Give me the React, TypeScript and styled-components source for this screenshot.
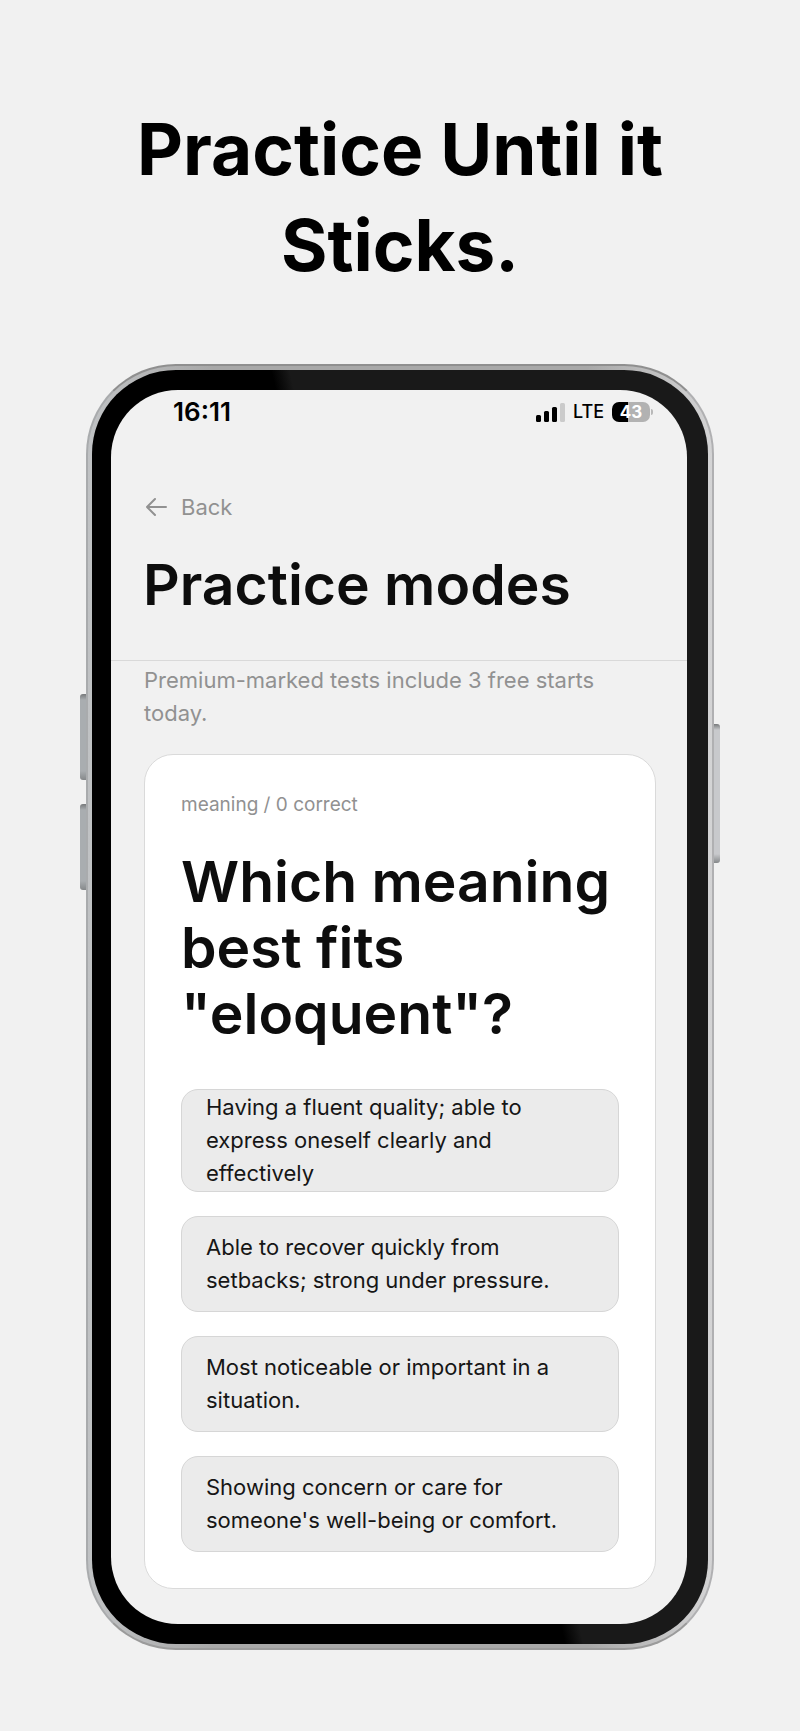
import React from 'react';
import styled, { createGlobalStyle } from 'styled-components';

const GlobalStyle = createGlobalStyle`
  * { box-sizing: border-box; }
  body {
    margin: 0;
    background: #f1f1f1;
    color: #0d0d0d;
    font-family: Inter, "Liberation Sans", sans-serif;
  }
  h1, h2, p { margin: 0; }
`;

const Page = styled.div`
  display: flex;
  flex-direction: column;
  gap: 71px;
  padding: 101px 86px 82px;
`;

const Headline = styled.h1`
  color: #000;
  font-size: 71px;
  line-height: 96px;
  font-weight: 700;
  text-align: center;
`;

const Phone = styled.div`
  position: relative;
  padding: 4px;
  border: 2px solid;
  border-color: #8f8f8f #b0b0b2 #9b9b9b #a9abad;
  border-radius: 90px;
  background: linear-gradient(90deg, #c0c2c4, #a8a8a8 20%, #a8a8a8 80%, #d4d4d5);
`;

const SideButton = styled.span<{ $side: 'left' | 'right'; $top: number; $height: number }>`
  position: absolute;
  ${(p) => p.$side}: -8px;
  top: ${(p) => p.$top}px;
  width: 6px;
  height: ${(p) => p.$height}px;
  border-radius: ${(p) => (p.$side === 'left' ? '3px 0 0 3px' : '0 3px 3px 0')};
  background: linear-gradient(
    #77797b,
    ${(p) => (p.$side === 'left' ? '#a9adb0' : '#c8c9cc')} 6px,
    ${(p) => (p.$side === 'left' ? '#a9adb0' : '#c8c9cc')} calc(100% - 9px),
    #85888a
  );
`;

const Bezel = styled.div`
  padding: 20px 21px 20px 19px;
  border-radius: 84px;
  background: linear-gradient(77deg, #000 52%, #191919 54%);
`;

const Screen = styled.main`
  overflow: hidden;
  padding-bottom: 35px;
  border-radius: 67px;
  background: #f1f1f1;
`;

const StatusBar = styled.div`
  display: flex;
  align-items: center;
  justify-content: space-between;
  padding: 6px 37px 0 62px;
`;

const Clock = styled.time`
  color: #000;
  font-size: 26px;
  line-height: 32px;
  font-weight: 600;
`;

const Indicators = styled.div`
  display: flex;
  align-items: center;
  gap: 8px;
  color: #000;
`;

const Network = styled.span`
  font-size: 18px;
  line-height: 32px;
  font-weight: 500;
`;

const Battery = styled.span`
  position: relative;
  width: 38px;
  border-radius: 7px;
  background: linear-gradient(90deg, #000 43%, #b2b2b2 43%);
  color: #fff;
  font-size: 17px;
  line-height: 20px;
  font-weight: 700;
  text-align: center;

  &::after {
    content: '';
    position: absolute;
    left: 39px;
    top: 7px;
    width: 2px;
    height: 6px;
    border-radius: 0 2px 2px 0;
    background: #b8b8b8;
  }
`;

const Header = styled.header`
  display: flex;
  flex-direction: column;
  align-items: flex-start;
  gap: 28px;
  padding: 63px 32px 41px;
  border-bottom: 1px solid #d9d9d9;
`;

const BackButton = styled.button`
  display: flex;
  align-items: center;
  gap: 14px;
  padding: 0 0 0 3px;
  border: 0;
  background: none;
  color: #919191;
  font: 400 22px/32px Inter, "Liberation Sans", sans-serif;
`;

const Title = styled.h2`
  font-size: 57px;
  line-height: 68px;
  font-weight: 600;
`;

const Content = styled.div`
  display: flex;
  flex-direction: column;
  gap: 24px;
  padding: 3px 31px 0 33px;
`;

const Notice = styled.p`
  color: #919191;
  font-size: 22px;
  line-height: 33px;
`;

const Card = styled.section`
  padding: 36px;
  border: 1px solid #dadada;
  border-radius: 29px;
  background: #fff;
`;

const Progress = styled.p`
  color: #919191;
  font-size: 19px;
  line-height: 28px;
`;

const Question = styled.h2`
  margin: 30px 0 42px;
  font-size: 57px;
  line-height: 66px;
  font-weight: 600;
`;

const Answers = styled.div`
  display: flex;
  flex-direction: column;
  gap: 24px;
`;

const Answer = styled.button`
  min-height: 96px;
  padding: 1px 24px;
  border: 1px solid #d6d6d6;
  border-radius: 17px;
  background: #ebebeb;
  color: #161616;
  font: 400 22px/33px Inter, "Liberation Sans", sans-serif;
  text-align: left;
`;

const BackArrow = () => (
  <svg width="21" height="20" viewBox="0 0 21 20" fill="none" stroke="currentColor" strokeWidth="2" strokeLinecap="round" strokeLinejoin="round" aria-hidden="true">
    <path d="M20 10H1M9 2L1 10l8 8" />
  </svg>
);

const Signal = () => (
  <svg width="29" height="20" viewBox="0 0 29 20" aria-hidden="true">
    <rect x="0" y="13" width="5" height="7" rx="1.5" />
    <rect x="8" y="9" width="5" height="11" rx="1.5" />
    <rect x="16" y="5" width="5" height="15" rx="1.5" />
    <rect x="24" y="1" width="5" height="19" rx="1.5" fill="#cbcbcb" />
  </svg>
);

const answers = [
  'Having a fluent quality; able to express oneself clearly and effectively',
  'Able to recover quickly from setbacks; strong under pressure.',
  'Most noticeable or important in a situation.',
  "Showing concern or care for someone's well-being or comfort.",
];

export default function App() {
  return (
    <>
      <GlobalStyle />
      <Page>
        <Headline>Practice Until it Sticks.</Headline>
        <Phone>
          <SideButton $side="left" $top={328} $height={86} />
          <SideButton $side="left" $top={438} $height={86} />
          <SideButton $side="right" $top={358} $height={139} />
          <Bezel>
            <Screen>
              <StatusBar>
                <Clock>16:11</Clock>
                <Indicators>
                  <Signal />
                  <Network>LTE</Network>
                  <Battery>43</Battery>
                </Indicators>
              </StatusBar>
              <Header>
                <BackButton type="button">
                  <BackArrow />
                  Back
                </BackButton>
                <Title>Practice modes</Title>
              </Header>
              <Content>
                <Notice>Premium-marked tests include 3 free starts today.</Notice>
                <Card>
                  <Progress>meaning / 0 correct</Progress>
                  <Question>Which meaning best fits "eloquent"?</Question>
                  <Answers>
                    {answers.map((text) => (
                      <Answer key={text} type="button">{text}</Answer>
                    ))}
                  </Answers>
                </Card>
              </Content>
            </Screen>
          </Bezel>
        </Phone>
      </Page>
    </>
  );
}
